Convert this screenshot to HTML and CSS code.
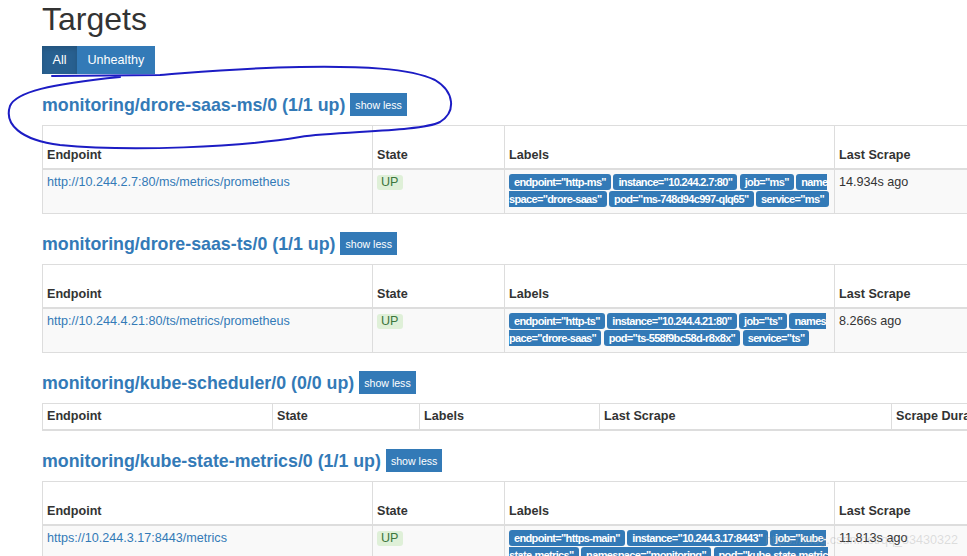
FILE: index.html
```html
<!DOCTYPE html>
<html lang="en">
<head>
<meta charset="UTF-8">
<meta name="viewport" content="width=device-width, initial-scale=1.0">
<title>Prometheus Time Series Collection and Processing Server</title>
<link rel="stylesheet" href="styles.css">
</head>
<body>
<div class="container">
    <h1>Targets</h1>
    <div class="btn-group">
        <button class="btn active">All</button><button class="btn">Unhealthy</button>
    </div>

    <div class="job">
        <h2 class="job-title"><a href="#job-monitoring/drore-saas-ms/0">monitoring/drore-saas-ms/0 (1/1 up)</a><button class="btn-xs">show less</button></h2>
        <table class="targets-table">
            <thead>
                <tr>
                    <th class="col-endpoint">Endpoint</th>
                    <th class="col-state">State</th>
                    <th class="col-labels">Labels</th>
                    <th class="col-scrape">Last Scrape</th>
                    <th class="col-duration">Scrape Duration</th>
                    <th class="col-error">Error</th>
                </tr>
            </thead>
            <tbody>
                <tr>
                    <td><a href="#">http://10.244.2.7:80/ms/metrics/prometheus</a></td>
                    <td><span class="state up">UP</span></td>
                    <td class="labels">
                        <span class="label">endpoint="http-ms"</span>
                        <span class="label">instance="10.244.2.7:80"</span>
                        <span class="label">job="ms"</span>
                        <span class="label">namespace="drore-saas"</span>
                        <span class="label">pod="ms-748d94c997-qlq65"</span>
                        <span class="label">service="ms"</span>
                    </td>
                    <td>14.934s ago</td>
                    <td>12.51ms</td>
                    <td></td>
                </tr>
            </tbody>
        </table>
    </div>

    <div class="job">
        <h2 class="job-title"><a href="#job-monitoring/drore-saas-ts/0">monitoring/drore-saas-ts/0 (1/1 up)</a><button class="btn-xs">show less</button></h2>
        <table class="targets-table">
            <thead>
                <tr>
                    <th class="col-endpoint">Endpoint</th>
                    <th class="col-state">State</th>
                    <th class="col-labels">Labels</th>
                    <th class="col-scrape">Last Scrape</th>
                    <th class="col-duration">Scrape Duration</th>
                    <th class="col-error">Error</th>
                </tr>
            </thead>
            <tbody>
                <tr>
                    <td><a href="#">http://10.244.4.21:80/ts/metrics/prometheus</a></td>
                    <td><span class="state up">UP</span></td>
                    <td class="labels">
                        <span class="label">endpoint="http-ts"</span>
                        <span class="label">instance="10.244.4.21:80"</span>
                        <span class="label">job="ts"</span>
                        <span class="label">namespace="drore-saas"</span>
                        <span class="label">pod="ts-558f9bc58d-r8x8x"</span>
                        <span class="label">service="ts"</span>
                    </td>
                    <td>8.266s ago</td>
                    <td>10.02ms</td>
                    <td></td>
                </tr>
            </tbody>
        </table>
    </div>

    <div class="job">
        <h2 class="job-title"><a href="#job-monitoring/kube-scheduler/0">monitoring/kube-scheduler/0 (0/0 up)</a><button class="btn-xs">show less</button></h2>
        <table class="targets-table no-rows">
            <thead>
                <tr>
                    <th class="col-endpoint">Endpoint</th>
                    <th class="col-state">State</th>
                    <th class="col-labels">Labels</th>
                    <th class="col-scrape">Last Scrape</th>
                    <th class="col-duration">Scrape Duration</th>
                    <th class="col-error">Error</th>
                </tr>
            </thead>
        </table>
    </div>

    <div class="job">
        <h2 class="job-title"><a href="#job-monitoring/kube-state-metrics/0">monitoring/kube-state-metrics/0 (1/1 up)</a><button class="btn-xs">show less</button></h2>
        <table class="targets-table">
            <thead>
                <tr>
                    <th class="col-endpoint">Endpoint</th>
                    <th class="col-state">State</th>
                    <th class="col-labels">Labels</th>
                    <th class="col-scrape">Last Scrape</th>
                    <th class="col-duration">Scrape Duration</th>
                    <th class="col-error">Error</th>
                </tr>
            </thead>
            <tbody>
                <tr>
                    <td><a href="#">https://10.244.3.17:8443/metrics</a></td>
                    <td><span class="state up">UP</span></td>
                    <td class="labels">
                        <span class="label">endpoint="https-main"</span>
                        <span class="label">instance="10.244.3.17:8443"</span>
                        <span class="label">job="kube-state-metrics"</span>
                        <span class="label">namespace="monitoring"</span>
                        <span class="label">pod="kube-state-metrics-7d4bb8d6c9-2xv5p"</span>
                        <span class="label">service="kube-state-metrics"</span>
                    </td>
                    <td>11.813s ago</td>
                    <td>48.3ms</td>
                    <td></td>
                </tr>
            </tbody>
        </table>
    </div>
</div>

<!-- hand drawn mark round the first job -->
<svg class="scribble" width="967" height="556" viewBox="0 0 967 556">
    <path d="M52 76 L160 75 C200 72 240 68 300 67 C360 66 410 68 435 80 C455 92 456 112 440 122 C420 132 340 131 300 137 C240 147 130 152 60 145 C20 140 4 124 10 106 C16 92 50 84 120 77" fill="none" stroke="#1c1cc4" stroke-width="2" stroke-linecap="round"/>
</svg>

<div class="watermark">https://blog.csdn.net/qq_33430322</div>
</body>
</html>
```

FILE: styles.css
```css
html, body {
    overflow: hidden;
}

body {
    margin: 0;
    font-family: "Liberation Sans", Arial, sans-serif;
    font-size: 12.6px;
    line-height: 17px;
    color: #333;
    background-color: #fff;
}

a {
    color: #337ab7;
    text-decoration: none;
}

.container {
    padding-left: 42px;
}

h1 {
    font-size: 32px;
    font-weight: normal;
    line-height: 35px;
    margin: 2px 0 9px;
}

.btn-group {
    display: flex;
}

.btn {
    font-family: inherit;
    font-size: 12.6px;
    line-height: 18px;
    padding: 5px 10.5px;
    color: #fff;
    background-color: #337ab7;
    border: none;
    cursor: pointer;
}

.btn.active {
    background-color: #286090;
    box-shadow: inset 0 3px 5px rgba(0, 0, 0, 0.125);
}

.job {
    margin-top: 19px;
}

.job + .job {
    margin-top: 18px;
}

.job-title {
    display: flex;
    align-items: center;
    gap: 5px;
    margin: 0 0 9px;
    font-size: 17.8px;
    line-height: 20px;
    font-weight: bold;
}

.btn-xs {
    font-family: inherit;
    font-size: 10.6px;
    font-weight: normal;
    line-height: 16px;
    height: 23px;
    padding: 0 5px;
    color: #fff;
    background-color: #337ab7;
    border: none;
    cursor: pointer;
}

.targets-table {
    border-collapse: collapse;
    table-layout: fixed;
    width: 1212px;
}

.targets-table th,
.targets-table td {
    box-sizing: border-box;
    border: 1px solid #ddd;
    text-align: left;
    padding: 4px 5px 4px 4px;
}

.targets-table th {
    vertical-align: bottom;
    font-weight: bold;
    border-bottom-width: 2px;
}

.targets-table td {
    vertical-align: top;
    padding-bottom: 5px;
}

.targets-table tbody tr {
    background-color: #f9f9f9;
}

.col-endpoint { width: 330px; }
.col-state { width: 132px; }
.col-labels { width: 330px; }
.col-scrape { width: 150px; }
.col-duration { width: 70px; }
.col-error { width: 200px; }

.no-rows {
    width: 1170px;
}

.no-rows .col-endpoint { width: 230px; }
.no-rows .col-state { width: 147px; }
.no-rows .col-labels { width: 180px; }
.no-rows .col-scrape { width: 292px; }
.no-rows .col-duration { width: 120px; }
.no-rows .col-error { width: 201px; }

.state {
    display: inline-block;
    padding: 0 4px;
    line-height: 15px;
    border-radius: 3px;
}

.state.up {
    color: #3c763d;
    background-color: #dff0d8;
}

.targets-table td.labels {
    word-break: break-all;
    word-spacing: -1px;
    padding-right: 5px;
}

.label {
    background-color: #337ab7;
    color: #fff;
    font-size: 11px;
    font-weight: bold;
    letter-spacing: -0.65px;
    padding: 2px 5px;
    border-radius: 3px;
}

.scribble {
    position: absolute;
    top: 0;
    left: 0;
    pointer-events: none;
}

.watermark {
    position: absolute;
    top: 532px;
    right: 9px;
    font-size: 12.6px;
    color: rgba(150, 150, 150, 0.3);
    pointer-events: none;
}
```
